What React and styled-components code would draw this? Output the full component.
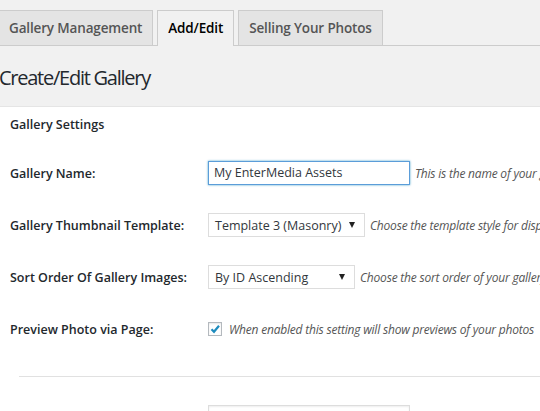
import React from 'react'
import styled, { createGlobalStyle } from 'styled-components'

const Global = createGlobalStyle`
  html, body {
    margin: 0;
    padding: 0;
    background: #f1f1f1;
    overflow: hidden;
  }
  body {
    font-family: "Open Sans", "Liberation Sans", sans-serif;
    color: #23282d;
  }
`

const Page = styled.div`
  width: 540px;
  height: 411px;
  overflow: hidden;
`

const TabBar = styled.div`
  display: flex;
  gap: 4px;
  padding-top: 10px;
  margin-left: -2px;
  border-bottom: 1px solid #ccc;
`

const Tab = styled.div`
  padding: 5px 10px;
  font-size: 13.5px;
  letter-spacing: -0.15px;
  line-height: 24px;
  font-weight: 600;
  border: 1px solid #ccc;
  border-bottom: none;
  background: ${p => (p.$active ? '#f1f1f1' : '#e4e4e4')};
  color: ${p => (p.$active ? '#000' : '#555')};
  margin-bottom: ${p => (p.$active ? '-1px' : '0')};
  padding-bottom: ${p => (p.$active ? '6px' : '5px')};
`

const Heading = styled.h1`
  margin: 0 0 0 -1px;
  padding: 17px 0 14px;
  font-size: 20px;
  letter-spacing: -1.25px;
  line-height: 29px;
  font-weight: 400;
  color: #23282d;
  border-bottom: 1px solid #e5e5e5;
`

const Panel = styled.div`
  background: #fff;
  padding: 9px 0 0 10px;
  height: 320px;
`

const SectionTitle = styled.h3`
  margin: 0 0 13px;
  font-size: 12.5px;
  line-height: 18px;
  font-weight: 600;
`

const Row = styled.div`
  display: grid;
  grid-template-columns: 198px auto;
  align-items: center;
  height: 52px;
  white-space: nowrap;
`

const Label = styled.label`
  font-size: 12.5px;
  font-weight: 600;
  color: #23282d;
`

const Field = styled.div`
  display: flex;
  align-items: center;
  gap: ${p => p.$gap || 5}px;
`

const TextInput = styled.div`
  box-sizing: border-box;
  width: 202px;
  height: 24px;
  padding: 0 5px;
  font-size: 12.5px;
  line-height: 22px;
  color: #32373c;
  border: 1px solid ${p => (p.$focus ? '#5b9dd9' : '#ddd')};
  box-shadow: ${p => (p.$focus ? '0 0 2px rgba(30,140,190,.8)' : 'inset 0 1px 2px rgba(0,0,0,.07)')};
  background: #fff;
`

const Select = styled.div`
  box-sizing: border-box;
  width: ${p => p.$width}px;
  height: 24px;
  padding: 0 9px 0 6px;
  display: flex;
  align-items: center;
  justify-content: space-between;
  font-size: 12.5px;
  color: #32373c;
  border: 1px solid #ddd;
  background: #fff;
`

const Arrow = styled.span`
  width: 0;
  height: 0;
  border-left: 3.5px solid transparent;
  border-right: 3.5px solid transparent;
  border-top: 6px solid #222;
`

const Checkbox = styled.span`
  box-sizing: border-box;
  width: 14px;
  height: 14px;
  border: 1px solid #b4b9be;
  background: #fff;
  box-shadow: inset 0 1px 2px rgba(0,0,0,.1);
  display: flex;
  align-items: center;
  justify-content: center;
`

const Description = styled.span`
  font-size: 12px;
  font-style: italic;
  color: #555;
  letter-spacing: -0.2px;
`

const Divider = styled.div`
  height: 1px;
  background: #e1e1e1;
  margin: 21px 0 14px 9px;
`

const Check = () => (
  <svg width="12" height="12" viewBox="0 0 12 12">
    <path d="M2.5 6.2 L5 8.8 L10 2.8" fill="none" stroke="#1e8cbe" strokeWidth="2.2" />
  </svg>
)

export default function App() {
  return (
    <Page>
      <Global />
      <TabBar>
        <Tab>Gallery Management</Tab>
        <Tab $active>Add/Edit</Tab>
        <Tab>Selling Your Photos</Tab>
      </TabBar>
      <Heading>Create/Edit Gallery</Heading>
      <Panel>
        <SectionTitle>Gallery Settings</SectionTitle>
        <Row>
          <Label>Gallery Name:</Label>
          <Field>
            <TextInput $focus>My EnterMedia Assets</TextInput>
            <Description>This is the name of your gallery</Description>
          </Field>
        </Row>
        <Row>
          <Label>Gallery Thumbnail Template:</Label>
          <Field>
            <Select $width={157}>Template 3 (Masonry)<Arrow /></Select>
            <Description>Choose the template style for displaying</Description>
          </Field>
        </Row>
        <Row>
          <Label>Sort Order Of Gallery Images:</Label>
          <Field>
            <Select $width={147}>By ID Ascending<Arrow /></Select>
            <Description>Choose the sort order of your gallery images</Description>
          </Field>
        </Row>
        <Row>
          <Label>Preview Photo via Page:</Label>
          <Field $gap={7}>
            <Checkbox><Check /></Checkbox>
            <Description>When enabled this setting will show previews of your photos</Description>
          </Field>
        </Row>
        <Divider />
        <Row>
          <Label></Label>
          <Field>
            <TextInput />
            <Description>Enter a price for</Description>
          </Field>
        </Row>
      </Panel>
    </Page>
  )
}
